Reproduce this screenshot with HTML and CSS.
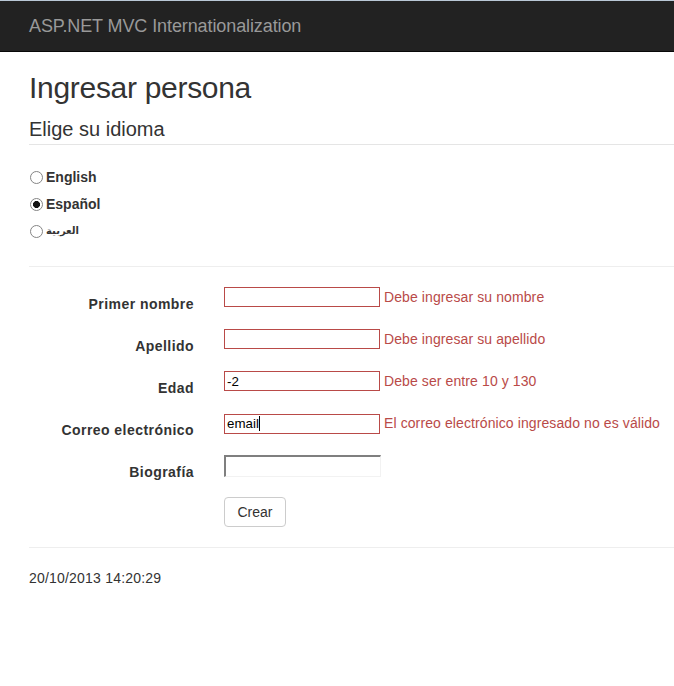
FILE: index.html
```html
<!DOCTYPE html>
<html lang="es">
<head>
<meta charset="utf-8">
<title>Ingresar persona</title>
<link rel="stylesheet" href="styles.css">
</head>
<body>
<header class="navbar">
  <span class="brand">ASP.NET MVC Internationalization</span>
</header>
<main class="container">
  <h2 class="title">Ingresar persona</h2>
  <div class="legend">Elige su idioma</div>
  <div class="langs">
    <label class="radio"><input type="radio" name="lang"> English</label>
    <label class="radio"><input type="radio" name="lang" checked> Español</label>
    <label class="radio"><input type="radio" name="lang"> <span class="ar" lang="ar">العربية</span></label>
  </div>
  <hr class="rule">
  <form class="form">
    <div class="row">
      <label class="lbl">Primer nombre</label>
      <div class="ctrl">
        <input class="field invalid" type="text">
        <span class="err">Debe ingresar su nombre</span>
      </div>
    </div>
    <div class="row">
      <label class="lbl">Apellido</label>
      <div class="ctrl">
        <input class="field invalid" type="text">
        <span class="err">Debe ingresar su apellido</span>
      </div>
    </div>
    <div class="row">
      <label class="lbl">Edad</label>
      <div class="ctrl">
        <input class="field invalid" type="text" value="-2">
        <span class="err">Debe ser entre 10 y 130</span>
      </div>
    </div>
    <div class="row">
      <label class="lbl">Correo electrónico</label>
      <div class="ctrl">
        <span class="caret-wrap"><input class="field invalid" type="text" value="email"><span class="caret"></span></span>
        <span class="err">El correo electrónico ingresado no es válido</span>
      </div>
    </div>
    <div class="row">
      <label class="lbl">Biografía</label>
      <div class="ctrl">
        <textarea class="area"></textarea>
      </div>
    </div>
    <div class="row">
      <span class="lbl"></span>
      <div class="ctrl">
        <button type="button" class="btn">Crear</button>
      </div>
    </div>
  </form>
  <hr class="rule footer-rule">
  <footer class="foot">20/10/2013 14:20:29</footer>
</main>
</body>
</html>
```

FILE: styles.css
```css
* { box-sizing: border-box; }
html, body { margin: 0; padding: 0; background: #fff; }
body {
  font-family: "Liberation Sans", Arial, sans-serif;
  font-size: 14px;
  line-height: 20px;
  color: #333;
  width: 674px;
  overflow: hidden;
}
.navbar {
  height: 52px;
  background: #222;
  border-top: 1px solid #b9c7d6;
  border-bottom: 1px solid #080808;
  padding-left: 29px;
}
.brand {
  display: block;
  font-size: 18px;
  line-height: 51px;
  color: #999;
  letter-spacing: -0.1px;
}
.container { padding-left: 29px; }
.title {
  margin: 19px 0 0;
  font-size: 30px;
  line-height: 33px;
  font-weight: normal;
  color: #333;
  letter-spacing: -0.3px;
}
.legend {
  margin-top: 10px;
  font-size: 20px;
  line-height: 30px;
  height: 31px;
  border-bottom: 1px solid #e5e5e5;
}
.langs {
  display: flex;
  flex-direction: column;
  gap: 7px;
  padding-top: 22px;
}
.radio {
  display: flex;
  align-items: flex-start;
  height: 20px;
  font-weight: bold;
}
.radio input {
  appearance: none;
  -webkit-appearance: none;
  width: 13px;
  height: 13px;
  margin: 4px 3px 0 1px;
  border: 1px solid #858585;
  border-radius: 50%;
  background: #fff;
}
.radio input:checked {
  background: radial-gradient(circle, #111 0, #111 3.2px, #fff 3.8px);
}
.ar { font-family: "DejaVu Sans", sans-serif; font-size: 10px; }
.rule {
  margin: 25px 0 0;
  border: 0;
  border-top: 1px solid #eee;
  height: 0;
}
.form { padding-top: 20px; }
.row {
  display: flex;
  align-items: flex-start;
  gap: 30px;
  height: 42px;
}
.lbl {
  width: 165px;
  flex: none;
  text-align: right;
  font-weight: bold;
  padding-top: 7px;
  letter-spacing: 0.45px;
}
.ctrl {
  display: flex;
  align-items: flex-start;
  gap: 4px;
}
.field {
  width: 156px;
  height: 20px;
  margin: 0;
  padding: 1px 2px;
  font-family: "Liberation Sans", Arial, sans-serif;
  font-size: 13.333px;
  color: #000;
  background: #fff;
  border: 1px solid #ccc;
  border-radius: 0;
  outline: none;
}
.invalid { border-color: #b94a48; }
.err { color: #b94a48; white-space: nowrap; letter-spacing: 0.1px; }
.caret-wrap { position: relative; display: block; }
.caret {
  position: absolute;
  left: 35px;
  top: 3px;
  width: 1px;
  height: 15px;
  background: #000;
}
.area {
  width: 157px;
  height: 22px;
  margin: 0;
  padding: 0;
  resize: none;
  border-style: solid;
  border-width: 2px 1px 1px 2px;
  border-color: #7f7f7f #f2f2f2 #f2f2f2 #7f7f7f;
  font-family: "Liberation Mono", monospace;
  font-size: 13px;
}
.btn {
  width: 62px;
  height: 30px;
  padding: 4px 12px;
  font-family: "Liberation Sans", Arial, sans-serif;
  font-size: 14px;
  line-height: 20px;
  color: #333;
  background: #fff;
  border: 1px solid #ccc;
  border-radius: 4px;
}
.footer-rule { margin-top: 8px; }
.foot { margin-top: 20px; letter-spacing: 0.2px; }
```
